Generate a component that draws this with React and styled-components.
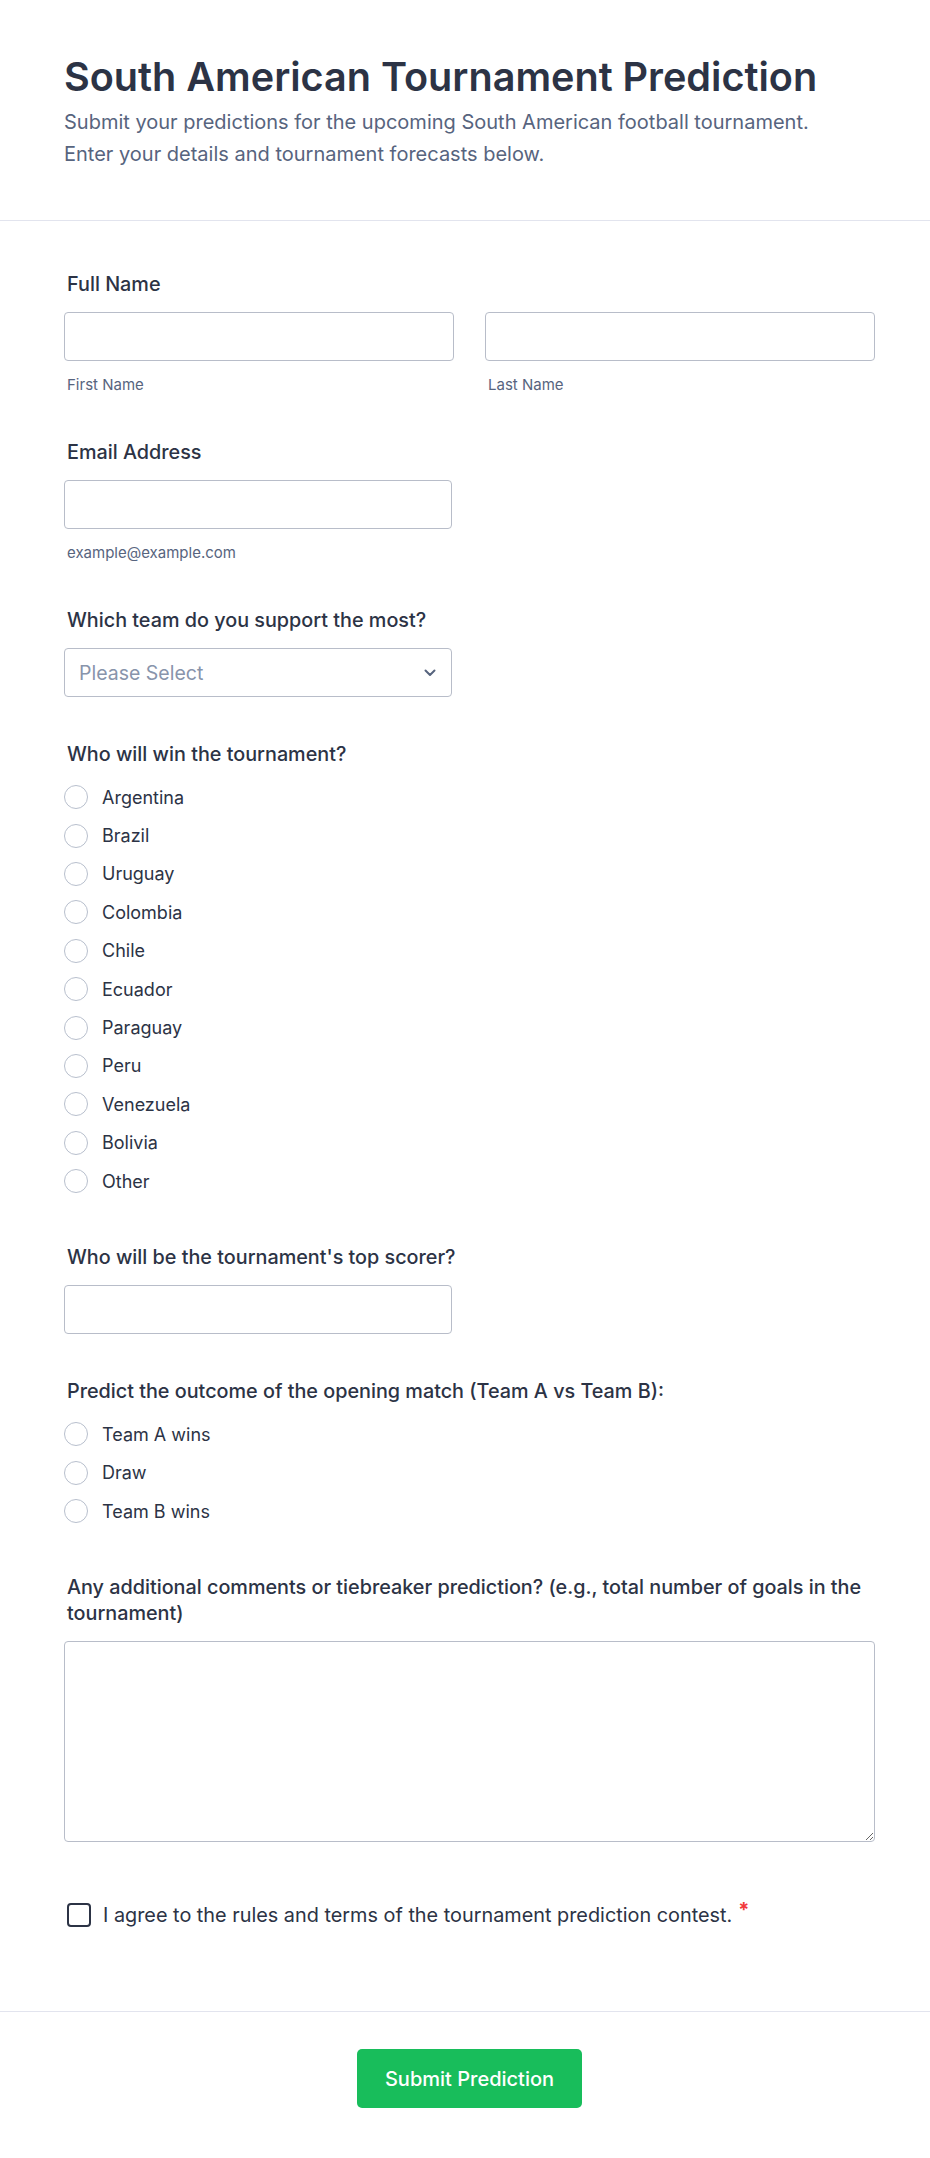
import React from "react";
import styled, { createGlobalStyle } from "styled-components";

const GlobalStyle = createGlobalStyle`
  * { box-sizing: border-box; }
  body {
    margin: 0;
    background: #ffffff;
    font-family: Inter, "Noto Sans", "Liberation Sans", sans-serif;
    color: #2c3345;
  }
`;

const Page = styled.div`
  width: 100%;
  background: #fff;
`;

const Header = styled.header`
  padding: 53px 55px 50px 64px;
  border-bottom: 1px solid #e2e4ee;
`;

const Title = styled.h1`
  margin: 0;
  font-size: 39.6px;
  line-height: 48px;
  font-weight: 600;
  color: #2c3345;
`;

const Subtitle = styled.p`
  margin: 5px 0 0;
  font-size: 20px;
  line-height: 32px;
  color: #57647e;
`;

const Body = styled.form`
  padding: 50px 55px 83px 64px;
  display: flex;
  flex-direction: column;
  gap: 44px;
`;

const Field = styled.div`
  display: flex;
  flex-direction: column;
  margin-top: ${(p) => (p.$extra ? p.$extra : "0")};
`;

const Label = styled.label`
  font-size: 19.8px;
  line-height: 26px;
  font-weight: 500;
  color: #2c3345;
  padding-left: 3px;
  margin-bottom: 15px;
`;

const Row = styled.div`
  display: grid;
  grid-template-columns: 1fr 1fr;
  gap: 31px;
`;

const Col = styled.div`
  display: flex;
  flex-direction: column;
`;

const Input = styled.input`
  width: ${(p) => p.$width || "100%"};
  height: 49px;
  border: 1px solid #b8bdc9;
  border-radius: 4px;
  padding: 0 14px;
  font: inherit;
  font-size: 19px;
  color: #2c3345;
  background: #fff;
  outline: none;
`;

const Sublabel = styled.span`
  margin-top: 14px;
  padding-left: 3px;
  font-size: 15px;
  line-height: 20px;
  color: #57647e;
`;

const SelectBox = styled.div`
  width: 388px;
  height: 49px;
  border: 1px solid #b8bdc9;
  border-radius: 4px;
  padding: 0 15px 0 14px;
  display: flex;
  align-items: center;
  justify-content: space-between;
  font-size: 19.5px;
  color: #8894ab;
`;

const RadioList = styled.div`
  display: flex;
  flex-direction: column;
  margin-top: -4px;
`;

const Option = styled.label`
  display: flex;
  align-items: center;
  gap: 14px;
  height: 38.4px;
  font-size: 18px;
  color: #2c3345;
`;

const Radio = styled.input.attrs({ type: "radio" })`
  appearance: none;
  margin: 0;
  width: 24px;
  height: 24px;
  border: 1.5px solid #b8bfcd;
  border-radius: 50%;
  background: #fff;
  flex-shrink: 0;
`;

const TextArea = styled.textarea`
  width: 100%;
  height: 201px;
  border: 1px solid #b8bdc9;
  border-radius: 4px;
  padding: 12px 14px;
  font: inherit;
  font-size: 18px;
  resize: vertical;
  outline: none;
`;

const CheckRow = styled.label`
  display: flex;
  align-items: center;
  gap: 12px;
  padding-left: 3px;
  font-size: 19.85px;
  line-height: 26px;
  color: #2c3345;
`;

const Checkbox = styled.input.attrs({ type: "checkbox" })`
  appearance: none;
  margin: 0;
  width: 24px;
  height: 24px;
  border: 2px solid #2c3345;
  border-radius: 4px;
  background: #fff;
  flex-shrink: 0;
`;

const Required = styled.span`
  color: #f23a3c;
  font-weight: 700;
  margin-left: 6px;
  position: relative;
  top: -5px;
`;

const Footer = styled.div`
  border-top: 1px solid #e2e4ee;
  padding: 37px 55px 50px 64px;
  display: flex;
  justify-content: center;
`;

const SubmitButton = styled.button`
  height: 59px;
  padding: 0 28px;
  border: none;
  border-radius: 5px;
  background: #18bd5b;
  color: #fff;
  font-family: inherit;
  font-size: 20px;
  font-weight: 500;
  cursor: pointer;
`;

const Chevron = () => (
  <svg width="12" height="8" viewBox="0 0 12 8" fill="none">
    <path d="M1.5 1.5 6 6l4.5-4.5" stroke="#57647e" strokeWidth="2" strokeLinecap="round" strokeLinejoin="round" />
  </svg>
);

const winners = [
  "Argentina",
  "Brazil",
  "Uruguay",
  "Colombia",
  "Chile",
  "Ecuador",
  "Paraguay",
  "Peru",
  "Venezuela",
  "Bolivia",
  "Other",
];

const outcomes = ["Team A wins", "Draw", "Team B wins"];

const App = () => {
  return (
    <Page>
      <GlobalStyle />
      <Header>
        <Title>South American Tournament Prediction</Title>
        <Subtitle>
          Submit your predictions for the upcoming South American football tournament.
          <br />
          Enter your details and tournament forecasts below.
        </Subtitle>
      </Header>

      <Body onSubmit={(e) => e.preventDefault()}>
        <Field>
          <Label>Full Name</Label>
          <Row>
            <Col>
              <Input />
              <Sublabel>First Name</Sublabel>
            </Col>
            <Col>
              <Input />
              <Sublabel>Last Name</Sublabel>
            </Col>
          </Row>
        </Field>

        <Field>
          <Label>Email Address</Label>
          <Input $width="388px" type="email" />
          <Sublabel>example@example.com</Sublabel>
        </Field>

        <Field>
          <Label>Which team do you support the most?</Label>
          <SelectBox>
            <span>Please Select</span>
            <Chevron />
          </SelectBox>
        </Field>

        <Field>
          <Label>Who will win the tournament?</Label>
          <RadioList>
            {winners.map((w) => (
              <Option key={w}>
                <Radio name="winner" value={w} />
                {w}
              </Option>
            ))}
          </RadioList>
        </Field>

        <Field>
          <Label>Who will be the tournament's top scorer?</Label>
          <Input $width="388px" />
        </Field>

        <Field>
          <Label>Predict the outcome of the opening match (Team A vs Team B):</Label>
          <RadioList>
            {outcomes.map((o) => (
              <Option key={o}>
                <Radio name="opening" value={o} />
                {o}
              </Option>
            ))}
          </RadioList>
        </Field>

        <Field>
          <Label>
            Any additional comments or tiebreaker prediction? (e.g., total number of goals in the tournament)
          </Label>
          <TextArea />
        </Field>

        <Field $extra="16px">
          <CheckRow>
            <Checkbox />
            <span>
              I agree to the rules and terms of the tournament prediction contest.
              <Required>*</Required>
            </span>
          </CheckRow>
        </Field>
      </Body>

      <Footer>
        <SubmitButton type="submit">Submit Prediction</SubmitButton>
      </Footer>
    </Page>
  );
};

export default App;
